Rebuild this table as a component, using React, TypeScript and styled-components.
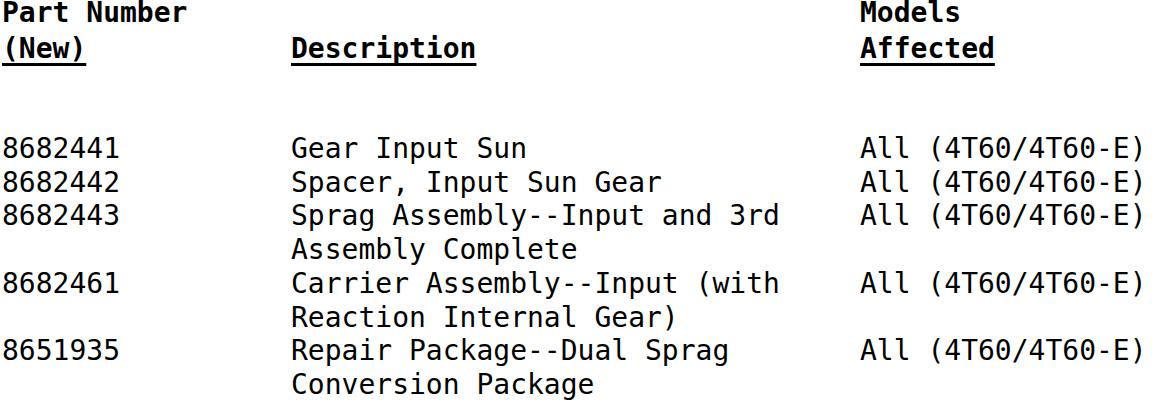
import styled, { createGlobalStyle } from "styled-components";

interface Part {
  number: string;
  lines: string[];
  models: string;
}

const parts: Part[] = [
  { number: "8682441", lines: ["Gear Input Sun"], models: "All (4T60/4T60-E)" },
  { number: "8682442", lines: ["Spacer, Input Sun Gear"], models: "All (4T60/4T60-E)" },
  {
    number: "8682443",
    lines: ["Sprag Assembly--Input and 3rd", "Assembly Complete"],
    models: "All (4T60/4T60-E)",
  },
  {
    number: "8682461",
    lines: ["Carrier Assembly--Input (with", "Reaction Internal Gear)"],
    models: "All (4T60/4T60-E)",
  },
  {
    number: "8651935",
    lines: ["Repair Package--Dual Sprag", "Conversion Package"],
    models: "All (4T60/4T60-E)",
  },
];

const GlobalStyle = createGlobalStyle`
  html, body {
    margin: 0;
    padding: 0;
    background: #fff;
  }
  body {
    width: 1152px;
    height: 404px;
    overflow: hidden;
  }
`;

const Page = styled.div`
  padding-left: 2px;
  color: #000;
  font-family: "DejaVu Sans Mono", "Liberation Mono", monospace;
  font-size: 28px;
`;

const Row = styled.div`
  display: grid;
  grid-template-columns: 289px 569px 1fr;
`;

const HeaderRow = styled(Row)`
  margin-bottom: 60px;
  font-weight: bold;
`;

const DataRow = styled(Row)`
  line-height: 33.7px;
  white-space: pre;
`;

const Cell = styled.div`
  display: flex;
  flex-direction: column;
`;

// first header line sits tight to the top, second one carries the underline
const HeadLine = styled.span<{ $underline?: boolean }>`
  display: block;
  white-space: pre;
  line-height: ${(p) => (p.$underline ? "46px" : "26px")};
  ${(p) =>
    p.$underline &&
    `
    text-decoration: underline;
    text-decoration-thickness: 3px;
    text-underline-offset: 5px;
    text-decoration-skip-ink: none;
  `}
`;

const Spacer = styled.span`
  display: block;
  height: 26px;
`;

export default function App() {
  return (
    <Page>
      <GlobalStyle />
      <HeaderRow>
        <Cell>
          <HeadLine>Part Number</HeadLine>
          <HeadLine $underline>(New)</HeadLine>
        </Cell>
        <Cell>
          <Spacer />
          <HeadLine $underline>Description</HeadLine>
        </Cell>
        <Cell>
          <HeadLine>Models</HeadLine>
          <HeadLine $underline>Affected</HeadLine>
        </Cell>
      </HeaderRow>
      {parts.map((p) => (
        <DataRow key={p.number}>
          <Cell>{p.number}</Cell>
          <Cell>
            {p.lines.map((l) => (
              <span key={l}>{l}</span>
            ))}
          </Cell>
          <Cell>{p.models}</Cell>
        </DataRow>
      ))}
    </Page>
  );
}
